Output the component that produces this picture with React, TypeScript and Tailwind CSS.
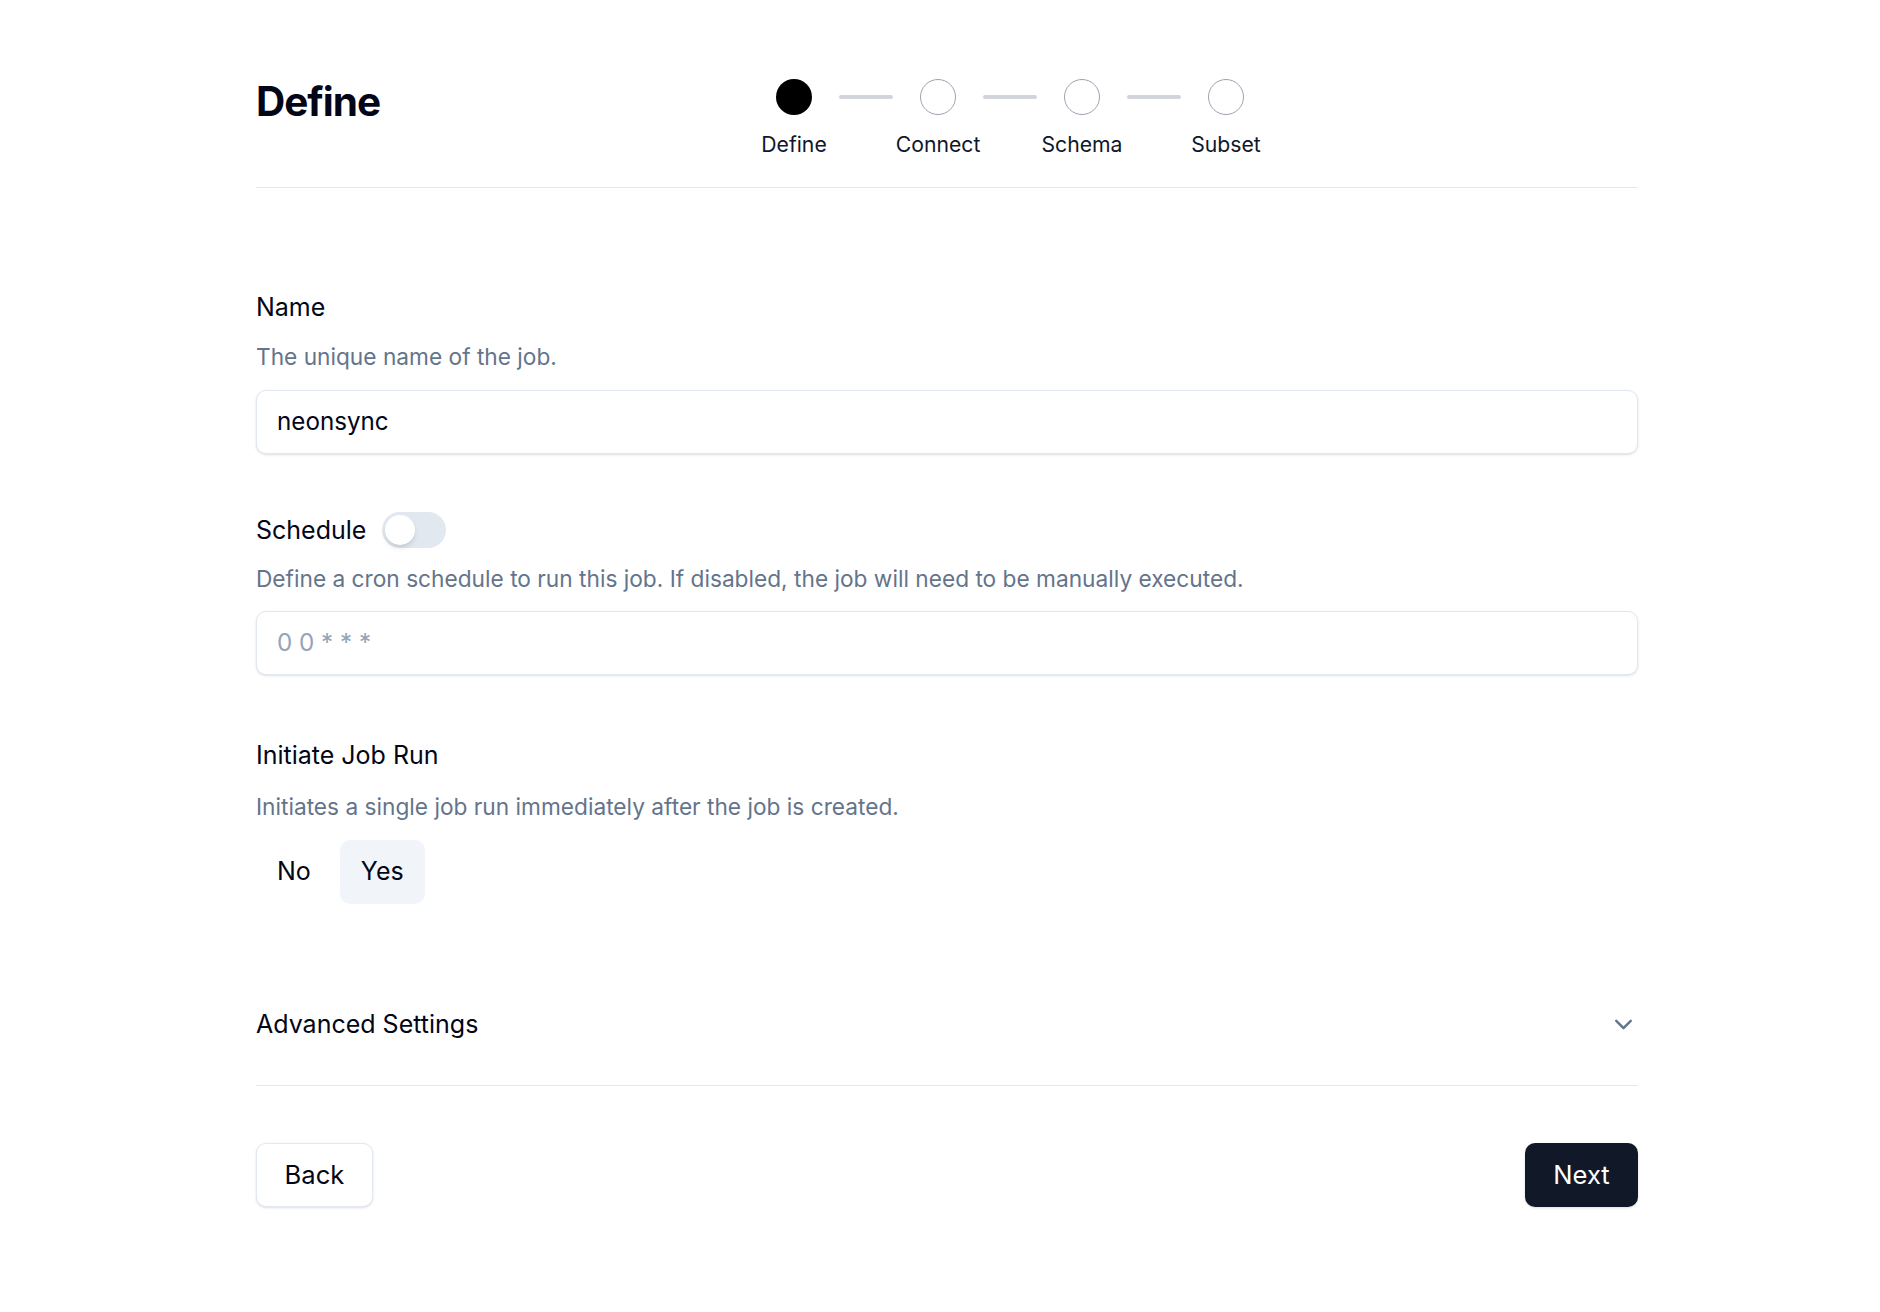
import { Fragment } from "react";
import { ChevronDown } from "lucide-react";

const steps = ["Define", "Connect", "Schema", "Subset"];

function Stepper() {
  return (
    <div className="mt-[1px] flex items-start">
      {steps.map((step, i) => (
        <Fragment key={step}>
          {i > 0 && (
            <div className="mx-[27px] mt-[16px] h-[4px] w-[54px] rounded-full bg-[#d1d5db]" />
          )}
          <div className="flex w-[36px] flex-col items-center">
            <div
              className={
                i === 0
                  ? "h-[36px] w-[36px] rounded-full bg-black"
                  : "h-[36px] w-[36px] rounded-full border border-[#9ca3af] bg-white"
              }
            />
            <span className="mt-[15px] whitespace-nowrap text-[21.2px] leading-[28px] text-[#0f172a]">
              {step}
            </span>
          </div>
        </Fragment>
      ))}
    </div>
  );
}

export default function App() {
  return (
    <div className="min-h-screen bg-white font-['Inter','Liberation_Sans',sans-serif] text-[25px] text-[#020617]">
      <div className="ml-[256px] w-[1382px]">
        {/* header */}
        <div className="flex items-start border-b border-[#e2e8f0] pt-[78px] pb-[29px]">
          <h1 className="w-[520px] shrink-0 text-[40.5px] leading-[48px] font-bold tracking-tight text-[#020617]">
            Define
          </h1>
          <Stepper />
        </div>

        {/* name */}
        <div className="mt-[103px] leading-[32px]">Name</div>
        <p className="mt-[18px] text-[22.7px] leading-[32px] text-[#64748b]">The unique name of the job.</p>
        <div className="mt-[17px] flex h-[64px] items-center rounded-[10px] border border-[#e2e8f0] bg-white px-[20px] text-[24.2px] shadow-sm">
          neonsync
        </div>

        {/* schedule */}
        <div className="mt-[58px] flex h-[36px] items-center gap-[16px]">
          <span className="leading-[32px]">Schedule</span>
          <button className="h-[36px] w-[64px] rounded-full bg-[#e2e8f0] p-[3px]">
            <div className="h-[30px] w-[30px] rounded-full bg-white shadow-md" />
          </button>
        </div>
        <p className="mt-[15px] text-[22.7px] leading-[32px] text-[#64748b]">
          Define a cron schedule to run this job. If disabled, the job will need to be manually executed.
        </p>
        <div className="mt-[16px] flex h-[64px] items-center rounded-[10px] border border-[#e2e8f0] bg-white px-[20px] text-[24.2px] text-[#94a3b8] shadow-sm">
          0 0 * * *
        </div>

        {/* initiate job run */}
        <div className="mt-[64px] leading-[32px]">Initiate Job Run</div>
        <p className="mt-[20px] text-[22.7px] leading-[32px] text-[#64748b]">
          Initiates a single job run immediately after the job is created.
        </p>
        <div className="mt-[17px] flex gap-[8px]">
          <button className="h-[64px] rounded-[10px] px-[21px]">No</button>
          <button className="h-[64px] rounded-[10px] bg-[#f1f5f9] px-[21px]">Yes</button>
        </div>

        {/* advanced */}
        <div className="mt-[104px] flex items-center justify-between border-b border-[#e2e8f0] pb-[45px]">
          <span className="leading-[32px]">Advanced Settings</span>
          <ChevronDown size={29} strokeWidth={2} className="text-[#64748b]" />
        </div>

        {/* footer */}
        <div className="mt-[57px] flex justify-between">
          <button className="h-[64px] w-[117px] rounded-[10px] border border-[#e2e8f0] bg-white text-[25.6px] shadow-sm">
            Back
          </button>
          <button className="h-[64px] w-[113px] rounded-[10px] bg-[#111827] text-[25.6px] text-white shadow-sm">
            Next
          </button>
        </div>
      </div>
    </div>
  );
}
